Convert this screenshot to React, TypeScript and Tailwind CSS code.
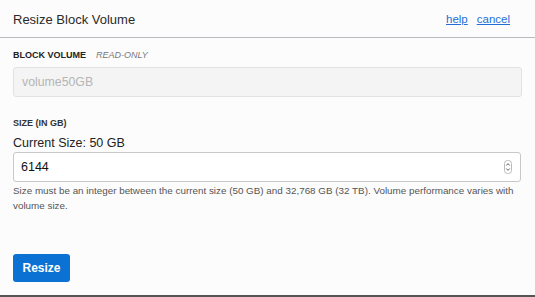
import React from "react";

export default function App() {
  return (
    <div
      className="w-[535px] h-[297px] bg-[#fcfcfc] flex flex-col text-[#222]"
      style={{ fontFamily: '"Liberation Sans", Arial, sans-serif' }}
    >
      <div className="h-[38px] flex items-center justify-between pl-[13px] pr-[25px] pt-[3px] border-b border-[#b9b9c0] shrink-0">
        <div className="text-[13px] text-[#2a2a2a]">Resize Block Volume</div>
        <div className="flex gap-[9px] text-[11.5px] text-[#1f6fd6]">
          <a className="underline" href="#">help</a>
          <a className="underline" href="#">cancel</a>
        </div>
      </div>
      <div className="flex-1 px-[13px] flex flex-col">
        <div className="mt-[11px] flex items-center gap-[10px] text-[9px] leading-[12px]">
          <span className="font-bold text-[#222]">BLOCK VOLUME</span>
          <span className="italic text-[#777]">READ-ONLY</span>
        </div>
        <div className="mt-[6px] w-[509px] h-[30px] bg-[#f4f4f4] border border-[#e2e2e2] rounded-[3px] flex items-center pl-[8px] text-[12.3px] text-[#b5b5b5]">
          volume50GB
        </div>
        <div className="mt-[21px] text-[9px] leading-[10px] font-bold text-[#333]">SIZE (IN GB)</div>
        <div className="mt-[8px] text-[12.5px] leading-[15px] text-[#222]">Current Size: 50 GB</div>
        <div className="mt-[1px] w-[508px] h-[30px] bg-white border border-[#c8c8c8] rounded-[3px] flex items-center justify-between pl-[7px] pr-[8px]">
          <span className="text-[12.5px] text-[#111]">6144</span>
          <svg width="8" height="14" viewBox="0 0 8 14">
            <rect x="0.5" y="0.5" width="7" height="13" rx="3" fill="#fff" stroke="#bbb" />
            <path d="M2.3 5.5 L4 3.6 L5.7 5.5" fill="none" stroke="#555" strokeWidth="0.9" />
            <path d="M2.3 8.5 L4 10.4 L5.7 8.5" fill="none" stroke="#555" strokeWidth="0.9" />
          </svg>
        </div>
        <div className="mt-[1px] w-[509px] text-[9.85px] leading-[15px] text-[#555]">
          Size must be an integer between the current size (50 GB) and 32,768 GB (32 TB). Volume performance varies with volume size.
        </div>
        <div className="mt-[41px]">
          <button className="w-[57px] h-[28px] bg-[#0b72d4] rounded-[3px] text-white text-[12px] font-bold">Resize</button>
        </div>
      </div>
      <div className="h-[2px] bg-[#555] shrink-0" />
    </div>
  );
}
